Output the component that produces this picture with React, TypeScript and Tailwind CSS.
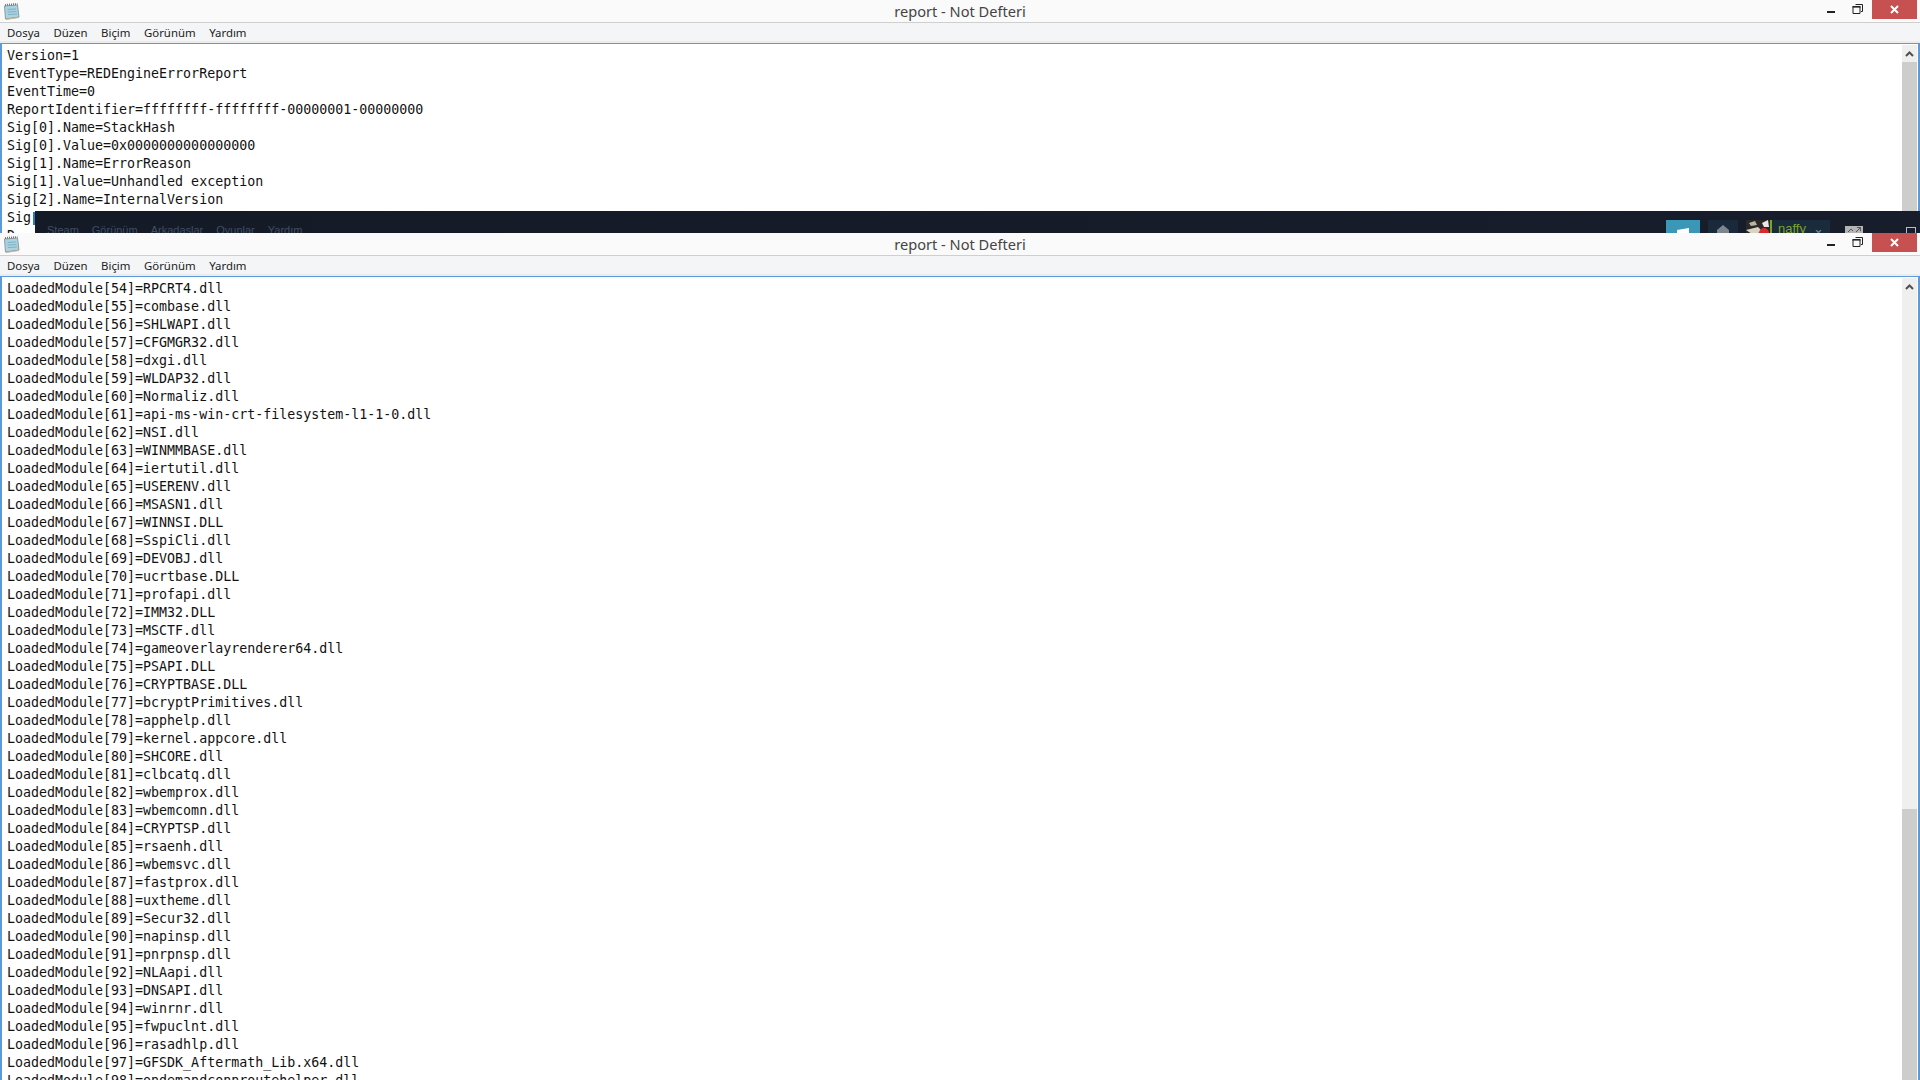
const topLines = [
  "Version=1",
  "EventType=REDEngineErrorReport",
  "EventTime=0",
  "ReportIdentifier=ffffffff-ffffffff-00000001-00000000",
  "Sig[0].Name=StackHash",
  "Sig[0].Value=0x0000000000000000",
  "Sig[1].Name=ErrorReason",
  "Sig[1].Value=Unhandled exception",
  "Sig[2].Name=InternalVersion",
  "Sig",
  "D",
]

const modules = [
  "RPCRT4.dll", "combase.dll", "SHLWAPI.dll", "CFGMGR32.dll", "dxgi.dll", "WLDAP32.dll", "Normaliz.dll",
  "api-ms-win-crt-filesystem-l1-1-0.dll", "NSI.dll", "WINMMBASE.dll", "iertutil.dll", "USERENV.dll",
  "MSASN1.dll", "WINNSI.DLL", "SspiCli.dll", "DEVOBJ.dll", "ucrtbase.DLL", "profapi.dll", "IMM32.DLL",
  "MSCTF.dll", "gameoverlayrenderer64.dll", "PSAPI.DLL", "CRYPTBASE.DLL", "bcryptPrimitives.dll",
  "apphelp.dll", "kernel.appcore.dll", "SHCORE.dll", "clbcatq.dll", "wbemprox.dll", "wbemcomn.dll",
  "CRYPTSP.dll", "rsaenh.dll", "wbemsvc.dll", "fastprox.dll", "uxtheme.dll", "Secur32.dll", "napinsp.dll",
  "pnrpnsp.dll", "NLAapi.dll", "DNSAPI.dll", "winrnr.dll", "fwpuclnt.dll", "rasadhlp.dll",
  "GFSDK_Aftermath_Lib.x64.dll", "ondemandconnroutehelper.dll",
]

function NotepadIcon() {
  return (
    <svg width="18" height="18" viewBox="0 0 18 18">
      <path d="M2.5 4 L15.5 3 L17 15 L3.5 17 Z" fill="#a9d3e2" stroke="#8c9aa0" />
      <path d="M5.5 7.5 L14 7 M5.5 10 L14.5 9.5 M6 12.5 L15 12" stroke="#7fb0c4" />
      <path d="M3 3 L15.5 2" stroke="#777" strokeWidth="2" strokeDasharray="1 1" />
      <path d="M4 17.5 L17 15.5" stroke="#c9b78c" strokeWidth="1" />
    </svg>
  )
}

function WindowChrome() {
  return (
    <>
      <div className="relative flex h-[23px] shrink-0 items-center border-b border-[#cfcfcf] bg-[#fafafa]">
        <div className="ml-[2px] mt-[-1px]">
          <NotepadIcon />
        </div>
        <div className="absolute inset-x-0 top-0 text-center text-[14.6px] leading-[22px] text-[#444]">report - Not Defteri</div>
        <div className="ml-auto flex h-[19px] items-start self-start">
          <svg width="10" height="19" viewBox="0 0 10 19" className="mr-[16px]">
            <rect x="1" y="11" width="8" height="2" fill="#222" />
          </svg>
          <svg width="12" height="19" viewBox="0 0 12 19" className="mr-[8px]">
            <path d="M3.5 4.5 H10.5 V11.5 H9 M1 6.5 H8 V13.5 H1 Z" fill="none" stroke="#222" strokeWidth="1" />
            <rect x="0.5" y="6" width="8" height="1.6" fill="#222" />
          </svg>
          <div className="mr-[3px] flex h-[19px] w-[45px] items-center justify-center bg-[#c75050]">
            <svg width="9" height="9" viewBox="0 0 9 9">
              <path d="M1 1 L8 8 M8 1 L1 8" stroke="#fff" strokeWidth="2" />
            </svg>
          </div>
        </div>
      </div>
      <div className="flex h-[20px] shrink-0 items-center gap-[13.5px] border-b-2 border-[#ececec] bg-[#f4f5f7] pl-[7px] pt-[2px] text-[11.4px] text-[#222]">
        <span>Dosya</span>
        <span>Düzen</span>
        <span>Biçim</span>
        <span>Görünüm</span>
        <span>Yardım</span>
      </div>
    </>
  )
}

function ScrollBar({ thumbFirst }: { thumbFirst: boolean }) {
  return (
    <div className="mr-[1px] mt-[1px] flex w-[15px] shrink-0 flex-col bg-[#efefef]">
      <div className="flex h-[17px] shrink-0 items-center justify-center">
        <svg width="9" height="6" viewBox="0 0 9 6">
          <path d="M1 5 L4.5 1.5 L8 5" fill="none" stroke="#505050" strokeWidth="2" />
        </svg>
      </div>
      {thumbFirst ? (
        <div className="h-[150px] bg-[#cdcdcd]" />
      ) : (
        <>
          <div className="h-[514px]" />
          <div className="flex-1 bg-[#cdcdcd]" />
        </>
      )}
    </div>
  )
}

function SteamOverlay() {
  return (
    <div className="absolute bottom-0 left-[35px] right-0 flex h-[22px] items-start overflow-hidden bg-gradient-to-r from-[#151a27] to-[#171d2a] font-['Liberation_Sans',sans-serif] text-[11px] text-[#3f4f62]">
      <div className="ml-[12px] mt-[9px] flex gap-[13px] leading-[20px]">
        <span>Steam</span>
        <span>Görünüm</span>
        <span>Arkadaşlar</span>
        <span>Oyunlar</span>
        <span>Yardım</span>
      </div>
      <div className="ml-auto flex items-start">
        <div className="mt-[9px] flex h-[20px] w-[34px] items-start justify-center bg-[#3b97b8] pt-[8px]">
          <svg width="12" height="6" viewBox="0 0 12 6">
            <path d="M0 2 L12 0 V6 H0 Z" fill="#fff" />
          </svg>
        </div>
        <div className="ml-[8px] mt-[9px] flex h-[20px] w-[30px] items-start justify-center bg-[#1a2a3a] pt-[5px]">
          <svg width="12" height="10" viewBox="0 0 12 10">
            <path d="M6 0 L12 5 V10 H0 V5 Z" fill="#7d858d" />
          </svg>
        </div>
        <svg width="26" height="20" viewBox="0 0 26 20" className="ml-[8px] mt-[9px]">
          <rect width="26" height="20" fill="#2c2826" />
          <path d="M0 10 L12 7 L17 12 L6 14 Z" fill="#d8d4c4" />
          <path d="M3 3 L9 1 L11 5 L5 6 Z" fill="#b8b4a8" />
          <path d="M16 3 L22 0 L23 7 L18 7 Z" fill="#e8e8e8" />
          <circle cx="18" cy="13" r="5" fill="#d92b2b" />
          <rect x="24" width="2" height="20" fill="#7ea32a" />
        </svg>
        <div className="mt-[9px] flex h-[20px] w-[58px] items-start justify-center gap-[7px] bg-[#1a2c3c] pt-[1px] text-[13px] leading-[16px] text-[#7ea32a]">
          <span>naffy</span>
          <span className="text-[#7f8d96]">⌄</span>
        </div>
        <svg width="18" height="7" viewBox="0 0 18 7" className="ml-[15px] mt-[15px]">
          <rect width="18" height="7" fill="#b4b4b4" />
          <path d="M3 6 L6 3 L8 5 M11 6 L15 2 M12 1.5 H15.5 V5" fill="none" stroke="#555" />
        </svg>
        <div className="ml-[43px] mr-[4px] mt-[16px] h-[20px] w-[10px] border border-[#b8bcc2]" />
      </div>
    </div>
  )
}

function NotepadWindow({ lines, isTop }: { lines: string[]; isTop: boolean }) {
  return (
    <div className={isTop ? "relative flex h-[233px] shrink-0 flex-col overflow-hidden" : "relative flex min-h-0 flex-1 flex-col overflow-hidden"}>
      <WindowChrome />
      <div className="flex min-h-0 flex-1 border-x-2 border-t border-[#5b9bdc] bg-white">
        <div className="relative min-w-0 flex-1 overflow-hidden pl-[5px] pt-[3px]">
          {lines.map((line, i) => (
            <div key={i} className="h-[18px] whitespace-pre font-['DejaVu_Sans_Mono',monospace] text-[13.3px] leading-[18px] text-[#111]">
              {line}
            </div>
          ))}
        </div>
        <ScrollBar thumbFirst={isTop} />
      </div>
      {isTop && (
        <>
          <div className="absolute left-[33px] top-[212px] h-[13px] w-[2px] bg-[#2a78b8]" />
          <SteamOverlay />
        </>
      )}
    </div>
  )
}

export default function App() {
  return (
    <div className="flex h-screen flex-col overflow-hidden bg-white font-['Noto_Sans',sans-serif]">
      <NotepadWindow lines={topLines} isTop={true} />
      <NotepadWindow lines={modules.map((name, i) => `LoadedModule[${i + 54}]=${name}`)} isTop={false} />
    </div>
  )
}
